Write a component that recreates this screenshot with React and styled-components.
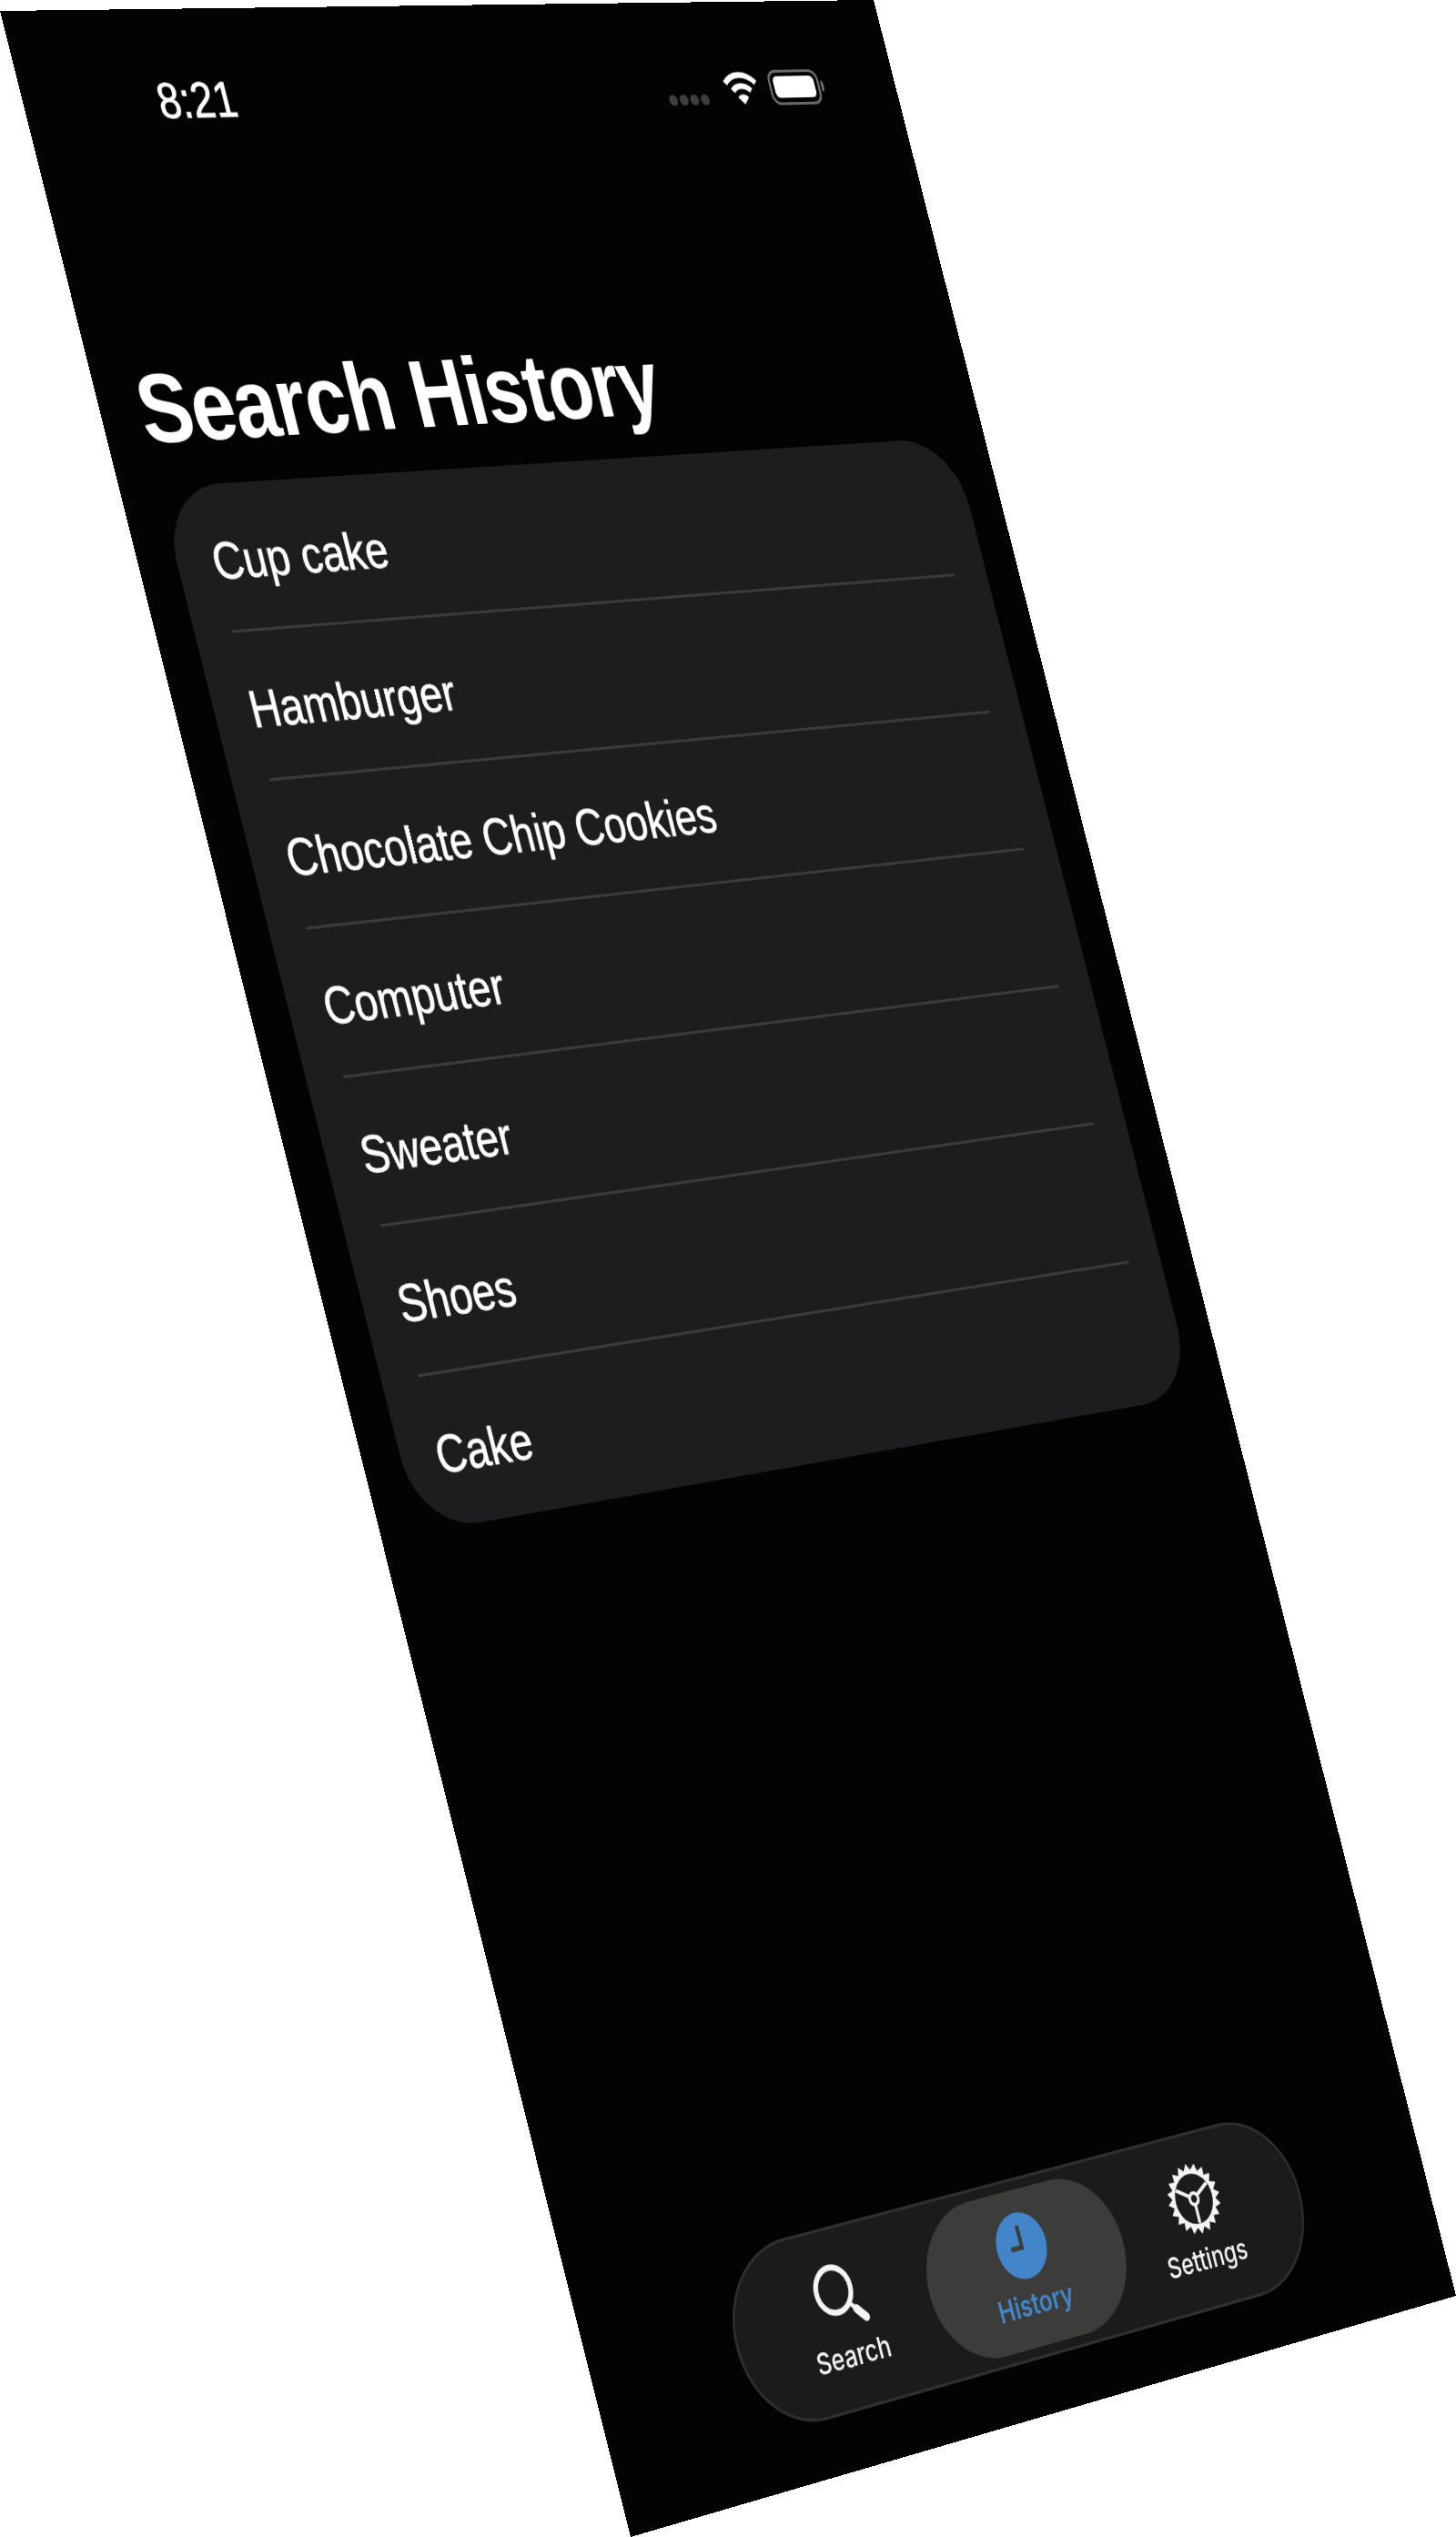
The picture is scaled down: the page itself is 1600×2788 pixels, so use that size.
import React from 'react';
import styled, { createGlobalStyle } from 'styled-components';

const SCREEN_W = 393;
const SCREEN_H = 852;
// the flat screen is laid out 3x larger so its text stays sharp under the perspective
const SCALE = 3;

// maps the flat phone screen onto the four corners seen in the picture
const quadToMatrix = ([x0, y0], [x1, y1], [x2, y2], [x3, y3], w, h0) => {
  const dx1 = x1 - x2;
  const dx2 = x3 - x2;
  const sx = x0 - x1 + x2 - x3;
  const dy1 = y1 - y2;
  const dy2 = y3 - y2;
  const sy = y0 - y1 + y2 - y3;
  const det = dx1 * dy2 - dx2 * dy1;
  const g = (sx * dy2 - dx2 * sy) / det;
  const h = (dx1 * sy - sx * dy1) / det;
  const a = x1 - x0 + g * x1;
  const b = x3 - x0 + h * x3;
  const d = y1 - y0 + g * y1;
  const e = y3 - y0 + h * y3;
  return `matrix3d(${a / w},${d / w},0,${g / w},${b / h0},${e / h0},0,${h / h0},0,0,1,0,${x0},${y0},0,1)`;
};

const screenMatrix = quadToMatrix(
  [0, 12],
  [960, 0],
  [1600, 2523],
  [693, 2788],
  SCREEN_W * SCALE,
  SCREEN_H * SCALE,
);

const GlobalStyle = createGlobalStyle`
  html, body {
    margin: 0;
    width: 1600px;
    height: 2788px;
    overflow: hidden;
    background: #ffffff;
  }
`;

const Phone = styled.div`
  width: ${SCREEN_W * SCALE}px;
  height: ${SCREEN_H * SCALE}px;
  transform-origin: 0 0;
  transform: ${screenMatrix};
`;

const Screen = styled.div`
  zoom: ${SCALE};
  width: ${SCREEN_W}px;
  height: ${SCREEN_H}px;
  display: flex;
  flex-direction: column;
  background: #030303;
  color: #ffffff;
  font-family: "Liberation Sans", Arial, sans-serif;
`;

const StatusBar = styled.div`
  height: 54px;
  flex-shrink: 0;
  display: flex;
  align-items: center;
  justify-content: space-between;
  padding: 9.5px 35px 0 56px;
  box-sizing: border-box;
`;

const Time = styled.div`
  font-size: 17px;
  font-weight: 400;
  -webkit-text-stroke: 0.25px #ffffff;
`;

const StatusIcons = styled.div`
  display: flex;
  align-items: center;
  gap: 5px;
  margin-left: -1px;
`;

const SignalDots = styled.div`
  display: flex;
  gap: 1px;
  margin: 8px 3px 0 0;
`;

const Dot = styled.span`
  width: 4px;
  height: 4px;
  border-radius: 50%;
  background: #3e3e3e;
`;

const Battery = styled.div`
  width: 24.5px;
  height: 13px;
  box-sizing: border-box;
  border: 1px solid #6a6a6a;
  border-radius: 4px;
  padding: 1.5px;
  margin-right: 2px;
  position: relative;

  &::before {
    content: '';
    display: block;
    height: 100%;
    background: #ffffff;
    border-radius: 2px;
  }

  &::after {
    content: '';
    position: absolute;
    right: -3px;
    top: 3.5px;
    width: 1.5px;
    height: 4px;
    border-radius: 0 2px 2px 0;
    background: #6a6a6a;
  }
`;

const Title = styled.h1`
  margin: 62px 0 6px 16px;
  font-size: 33.1px;
  line-height: 41px;
  font-weight: 700;
  letter-spacing: -0.4px;
`;

const Card = styled.ul`
  list-style: none;
  margin: 0 16px;
  padding: 0;
  background: #1d1d1f;
  border-radius: 26px;
`;

const Row = styled.li`
  height: 50.7px;
  box-sizing: border-box;
  margin: 0 15.6px;
  padding-top: 2.5px;
  display: flex;
  align-items: center;
  font-size: 17.7px;
  -webkit-text-stroke: 0.22px #ffffff;
  border-bottom: ${({ $last }) => ($last ? 'none' : '1.1px solid #3a3a3c')};
`;

const RowLabel = styled.span`
  margin-left: -0.7px;
`;

const TabBar = styled.nav`
  margin: auto 0 19px;
  align-self: center;
  width: 268px;
  height: 62px;
  box-sizing: border-box;
  padding: 3px 7px 3px 5px;
  display: flex;
  justify-content: center;
  background: #1a1c1b;
  border: 1px solid #2f2f2f;
  border-radius: 31px;
`;

const Tab = styled.div`
  width: ${({ $active }) => ($active ? '92px' : '84px')};
  margin: ${({ $active }) => ($active ? '0 -5px 0 -3px' : '0')};
  padding-bottom: 1.2px;
  box-sizing: border-box;
  display: flex;
  flex-direction: column;
  align-items: center;
  justify-content: center;
  gap: 2.6px;
  border-radius: 28px;
  background: ${({ $active }) => ($active ? '#3c3c3b' : 'transparent')};
  color: ${({ $active }) => ($active ? '#4285c8' : '#f4f4f4')};
`;

const TabLabel = styled.span`
  font-family: Inter, "Liberation Sans", sans-serif;
  font-size: 10px;
  line-height: 12px;
  font-weight: ${({ $active }) => ($active ? 600 : 500)};
`;

const GearSvg = styled.svg`
  margin-left: 1.5px;
`;

const WifiIcon = () => (
  <svg width="17" height="13" viewBox="0 0 16 12" fill="none">
    <path d="M1.2 4.2a9.6 9.6 0 0 1 13.6 0" stroke="#fff" strokeWidth="2" />
    <path d="M3.9 6.9a5.8 5.8 0 0 1 8.2 0" stroke="#fff" strokeWidth="2" />
    <path d="M8 11.6 5.6 9.1a3.4 3.4 0 0 1 4.8 0z" fill="#fff" />
  </svg>
);

const SearchIcon = () => (
  <svg width="24" height="24" viewBox="0 0 24 24" fill="none" stroke="currentColor">
    <circle cx="10" cy="10" r="7.6" strokeWidth="2.1" />
    <path d="M15.6 15.6 L18 18" strokeWidth="1.6" />
    <path d="M18 18 L21.4 21.4" strokeWidth="3" strokeLinecap="round" />
  </svg>
);

const ClockIcon = () => (
  <svg width="23" height="23" viewBox="0 0 24 24" fill="none">
    <circle cx="12" cy="12" r="12" fill="#4285c8" />
    <path d="M12 4.6V12.6H6.8" stroke="#3c3c3b" strokeWidth="1.7" />
  </svg>
);

// gear outline with one pair of points per tooth
const gearPath = () => {
  const teeth = 20;
  const pts = [];
  for (let i = 0; i < teeth * 2; i += 1) {
    const r = i % 2 === 0 ? 13 : 10.6;
    const a = (i * Math.PI) / teeth;
    pts.push(`${(13 + r * Math.sin(a)).toFixed(2)} ${(13 - r * Math.cos(a)).toFixed(2)}`);
  }
  return `M${pts.join('L')}z`;
};

const SettingsIcon = () => (
  <GearSvg width="25" height="25" viewBox="0 0 26 26" fill="none" stroke="currentColor">
    <path d={gearPath()} fill="currentColor" stroke="none" />
    <circle cx="13" cy="13" r="9.2" fill="#1a1c1b" stroke="none" />
    <path d="M13 15.2V22M11.1 11.9 5.2 8.5M14.9 11.9 20.8 8.5" strokeWidth="1.4" />
    <circle cx="13" cy="13" r="2.1" strokeWidth="1.3" />
  </GearSvg>
);

const items = ['Cup cake', 'Hamburger', 'Chocolate Chip Cookies', 'Computer', 'Sweater', 'Shoes', 'Cake'];

const App = () => (
  <>
    <GlobalStyle />
    <Phone>
      <Screen>
        <StatusBar>
          <Time>8:21</Time>
          <StatusIcons>
            <SignalDots>
              <Dot />
              <Dot />
              <Dot />
              <Dot />
            </SignalDots>
            <WifiIcon />
            <Battery />
          </StatusIcons>
        </StatusBar>
        <Title>Search History</Title>
        <Card>
          {items.map((item, i) => (
            <Row key={item} $last={i === items.length - 1}>
              <RowLabel>{item}</RowLabel>
            </Row>
          ))}
        </Card>
        <TabBar>
          <Tab>
            <SearchIcon />
            <TabLabel>Search</TabLabel>
          </Tab>
          <Tab $active>
            <ClockIcon />
            <TabLabel $active>History</TabLabel>
          </Tab>
          <Tab>
            <SettingsIcon />
            <TabLabel>Settings</TabLabel>
          </Tab>
        </TabBar>
      </Screen>
    </Phone>
  </>
);

export default App;
